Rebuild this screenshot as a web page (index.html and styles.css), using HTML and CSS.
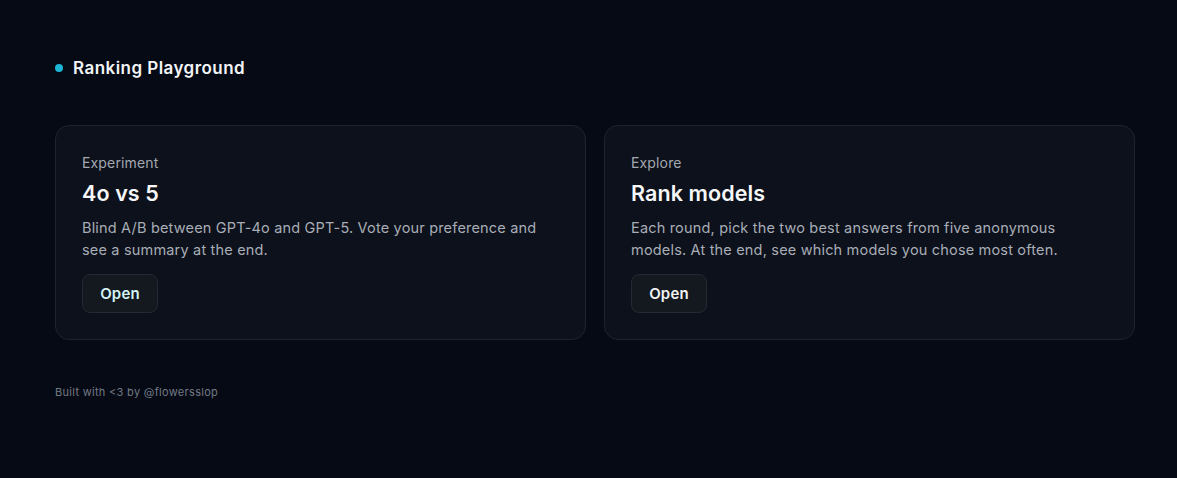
FILE: index.html
```html
<!DOCTYPE html>
<html>
<head>
<meta charset="utf-8">
<link rel="stylesheet" href="styles.css">
</head>
<body>
<div class="page">
  <header class="brand">
    <span class="dot"></span>
    <span class="brand-name">Ranking Playground</span>
  </header>
  <main class="cards">
    <section class="card">
      <div class="kicker">Experiment</div>
      <h2 class="title">4o vs 5</h2>
      <p class="desc">Blind A/B between GPT-4o and GPT-5. Vote your preference and see a summary at the end.</p>
      <button class="btn btn-cyan">Open</button>
    </section>
    <section class="card">
      <div class="kicker">Explore</div>
      <h2 class="title">Rank models</h2>
      <p class="desc">Each round, pick the two best answers from five anonymous models. At the end, see which models you chose most often.</p>
      <button class="btn">Open</button>
    </section>
  </main>
  <footer class="footer">Built with &lt;3 by @flowersslop</footer>
</div>
</body>
</html>
```
FILE: styles.css
```css
html, body {
  margin: 0;
  padding: 0;
  background: #050a14;
  height: 100%;
}
body {
  font-family: Inter, "Noto Sans", sans-serif;
  color: #f1f3f6;
}
.page {
  padding: 57px 0 0 55px;
  width: 1080px;
}
.brand {
  display: flex;
  align-items: center;
  gap: 10px;
  height: 22px;
}
.dot {
  width: 8px;
  height: 8px;
  border-radius: 50%;
  background: #1cb5d6;
}
.brand-name {
  font-size: 17px;
  font-weight: 600;
  letter-spacing: 0.45px;
  color: #f3f4f7;
}
.cards {
  display: grid;
  grid-template-columns: 1fr 1fr;
  gap: 18px;
  margin-top: 46px;
}
.card {
  background: #0c111b;
  border: 1px solid #1e242f;
  border-radius: 14px;
  padding: 28px 26px 26px 26px;
  height: 215px;
  box-sizing: border-box;
}
.kicker {
  font-size: 14px;
  color: #a3a8b1;
  line-height: 18px;
  letter-spacing: 0.15px;
}
.title {
  margin: 8px 0 0 0;
  font-size: 21.5px;
  font-weight: 600;
  line-height: 26px;
  color: #f6f7f9;
  letter-spacing: 0.1px;
}
.desc {
  margin: 11px 0 0 0;
  font-size: 14.5px;
  line-height: 22px;
  color: #a8adb6;
  letter-spacing: 0.18px;
}
.btn {
  margin-top: 13px;
  width: 76px;
  height: 39px;
  border-radius: 8px;
  background: #14181f;
  border: 1px solid #242932;
  color: #f1f2f4;
  font-family: Inter, "Noto Sans", sans-serif;
  font-size: 15px;
  font-weight: 600;
  letter-spacing: 0.2px;
  padding: 0;
}
.btn-cyan {
  color: #d3f3f4;
}
.footer {
  margin-top: 45px;
  font-size: 11px;
  color: #737985;
  letter-spacing: 0.3px;
}
```
